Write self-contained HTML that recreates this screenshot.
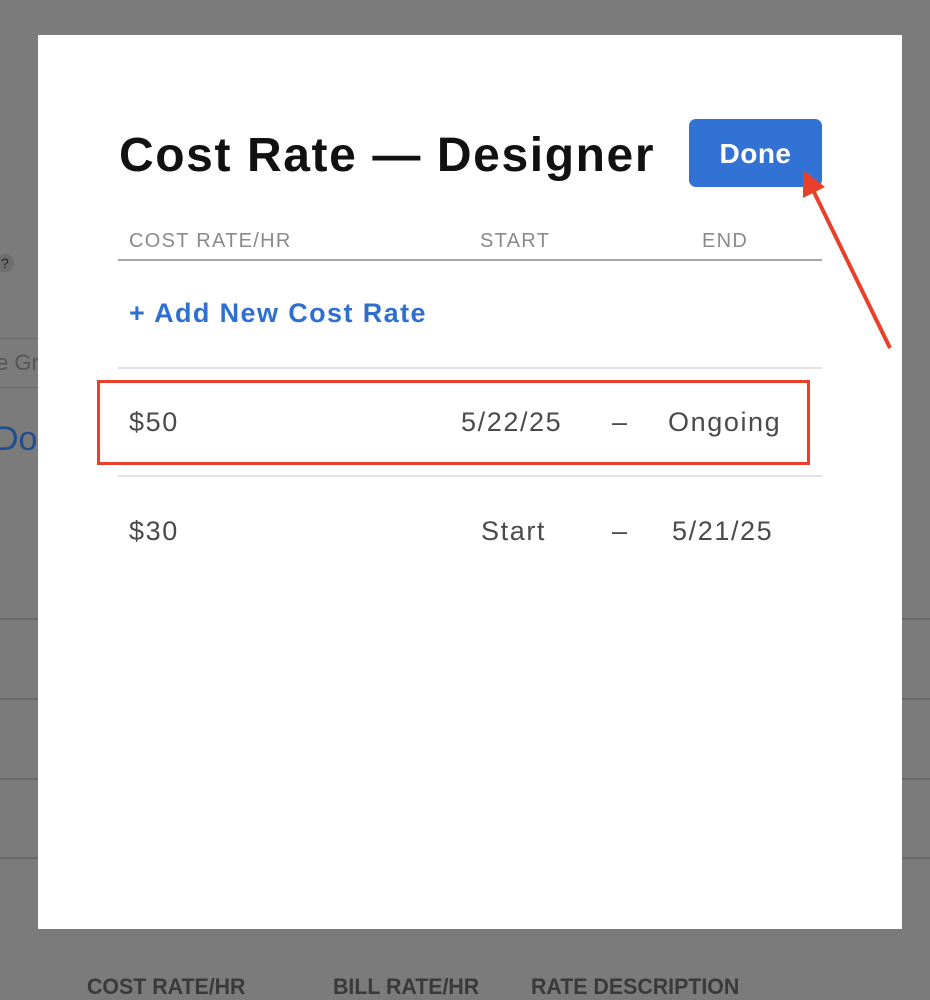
<!DOCTYPE html>
<html><head><meta charset="utf-8"><style>
body{margin:0;width:930px;height:998px;background:#7b7b7b;position:relative;overflow:hidden;font-family:"Liberation Sans",sans-serif}
.a{position:absolute;white-space:nowrap}
.ln{position:absolute;height:2px;background:#6a6a6a}
.m{position:absolute;left:38px;top:35px;width:864px;height:894px;background:#fff}
.t{color:#4a4a4a;font-size:27px;letter-spacing:1.6px}
.h{color:#8a8a8a;font-size:20px;letter-spacing:1.3px}
.b{color:#3a3a3a;font-size:22px;font-weight:bold;transform:scaleX(.97);transform-origin:left}
</style></head><body>
<div class="ln" style="left:0;top:618px;width:930px"></div>
<div class="ln" style="left:0;top:698px;width:930px"></div>
<div class="ln" style="left:0;top:778px;width:930px"></div>
<div class="ln" style="left:0;top:857px;width:930px"></div>
<div class="a" style="left:-4px;top:254px;width:18px;height:18px;border-radius:9px;background:#6e6e6e;color:#222;font-size:14px;text-align:center;line-height:18px">?</div>
<div class="a" style="left:-10px;top:338px;width:60px;height:48px;border:1px solid #6a6a6a"></div>
<div class="a" style="left:-4px;top:350px;color:#555;font-size:22px">e Gr</div>
<div class="a" style="left:-6px;top:420px;color:#1f4f8f;font-size:34px">Do</div>
<div class="a b" style="left:87px;top:974px">COST RATE/HR</div>
<div class="a b" style="left:333px;top:974px">BILL RATE/HR</div>
<div class="a b" style="left:531px;top:974px">RATE DESCRIPTION</div>
<div class="m"></div>
<div class="a" style="left:119px;top:126px;font-size:48px;font-weight:bold;color:#111;line-height:60px;letter-spacing:1.6px">Cost Rate — Designer</div>
<div class="a" style="left:689px;top:119px;width:133px;height:68px;background:#3272d4;border-radius:7px;color:#fff;font-size:28px;font-weight:bold;text-align:center;line-height:70px;letter-spacing:.5px">Done</div>
<div class="a h" style="left:129px;top:230px">COST RATE/HR</div>
<div class="a h" style="left:480px;top:230px">START</div>
<div class="a h" style="left:702px;top:230px">END</div>
<div class="a" style="left:118px;top:259px;width:704px;height:2px;background:#a8a8a8"></div>
<div class="a" style="left:129px;top:298px;color:#2f6fd1;font-size:27px;font-weight:bold;letter-spacing:1.4px">+ Add New Cost Rate</div>
<div class="a" style="left:118px;top:367px;width:704px;height:2px;background:#e2e2e2"></div>
<div class="a t" style="left:129px;top:407px">$50</div>
<div class="a t" style="left:461px;top:407px">5/22/25</div>
<div class="a t" style="left:612px;top:407px">–</div>
<div class="a t" style="left:668px;top:407px">Ongoing</div>
<div class="a" style="left:97px;top:380px;width:707px;height:79px;border:3px solid #e8402a"></div>
<div class="a" style="left:118px;top:475px;width:704px;height:2px;background:#e2e2e2"></div>
<div class="a t" style="left:129px;top:516px">$30</div>
<div class="a t" style="left:481px;top:516px">Start</div>
<div class="a t" style="left:612px;top:516px">–</div>
<div class="a t" style="left:672px;top:516px">5/21/25</div>
<svg class="a" style="left:0;top:0" width="930" height="998"><line x1="890" y1="348" x2="812" y2="188" stroke="#e8402a" stroke-width="4"/><polygon points="803,170 825,187 803,198" fill="#e8402a"/></svg>
</body></html>
